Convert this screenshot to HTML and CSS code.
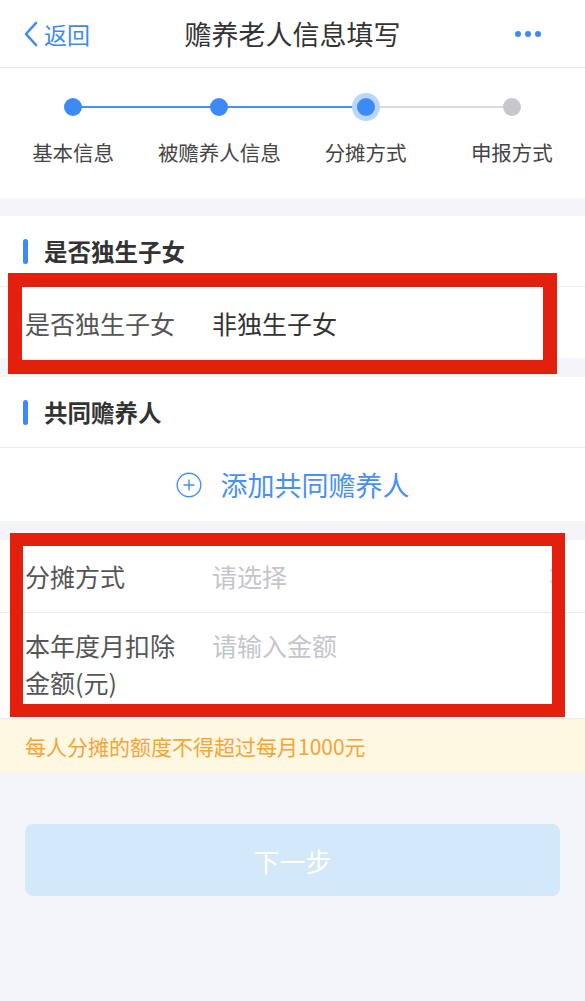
FILE: index.html
```html
<!DOCTYPE html>
<html lang="zh-CN">
<head>
  <meta charset="UTF-8">
  <title>赡养老人信息填写</title>
  <link rel="stylesheet" href="styles.css">
</head>
<body>

  <!-- Top nav bar -->
  <header class="nav">
    <a class="nav-back">
      <svg width="16" height="26" viewBox="0 0 16 26"><polyline points="13,2 3,13 13,24" fill="none" stroke="#3d8af7" stroke-width="2.6" stroke-linecap="round" stroke-linejoin="round"/></svg>
      <span>返回</span>
    </a>
    <h1 class="nav-title">赡养老人信息填写</h1>
    <span class="nav-more"><i></i><i></i><i></i></span>
  </header>

  <!-- Steps -->
  <div class="steps">
    <div class="step done"><span class="dot"></span><span class="step-label">基本信息</span></div>
    <div class="step done"><span class="dot"></span><span class="step-label">被赡养人信息</span></div>
    <div class="step current"><span class="dot"></span><span class="step-label">分摊方式</span></div>
    <div class="step"><span class="dot"></span><span class="step-label">申报方式</span></div>
  </div>

  <section class="card">
    <div class="card-title"><span class="bar"></span>是否独生子女</div>
    <div class="row">
      <span class="row-label">是否独生子女</span>
      <span class="row-value">非独生子女</span>
    </div>
  </section>

  <section class="card">
    <div class="card-title"><span class="bar"></span>共同赡养人</div>
    <div class="add-row">
      <svg width="26" height="26" viewBox="0 0 26 26"><circle cx="13" cy="13" r="11.8" fill="none" stroke="#4a8ff5" stroke-width="1.4"/><path d="M13 7.5v11M7.5 13h11" stroke="#4a8ff5" stroke-width="1.4"/></svg>
      <span>添加共同赡养人</span>
    </div>
  </section>

  <section class="card form">
    <div class="row">
      <span class="row-label">分摊方式</span>
      <span class="row-value placeholder">请选择</span>
      <svg class="arrow" width="9" height="16" viewBox="0 0 9 16"><polyline points="1.5,1.5 7.5,8 1.5,14.5" fill="none" stroke="#c8c8cc" stroke-width="1.6"/></svg>
    </div>
    <div class="row tall">
      <span class="row-label">本年度月扣除<br>金额(元)</span>
      <span class="row-value placeholder">请输入金额</span>
    </div>
  </section>

  <p class="tip">每人分摊的额度不得超过每月1000元</p>

  <div class="actions">
    <button class="next" disabled>下一步</button>
  </div>

  <!-- annotation boxes over the screenshot -->
  <div class="mark mark-one"></div>
  <div class="mark mark-two"></div>

</body>
</html>
```

FILE: styles.css
```css
body {
  margin: 0;
  position: relative;
  min-height: 1001px;
  background-color: #f4f5f9;
  font-family: "Noto Sans CJK SC", "Noto Sans", sans-serif;
  color: #333;
}

/* nav */
.nav {
  display: grid;
  grid-template-columns: 1fr auto 1fr;
  align-items: center;
  height: 67px;
  background-color: #fff;
  border-bottom: 1px solid #e3e4e8;
}

.nav-back {
  display: flex;
  align-items: center;
  gap: 5px;
  padding-left: 23px;
  color: #3d8af7;
  font-size: 23px;
}

.nav-title {
  margin: 0;
  font-size: 27px;
  font-weight: normal;
  color: #333;
}

.nav-more {
  justify-self: end;
  display: flex;
  gap: 4px;
  padding-right: 44px;
}

.nav-more i {
  width: 6px;
  height: 6px;
  border-radius: 50%;
  background-color: #3d8af7;
}

/* steps */
.steps {
  display: grid;
  grid-template-columns: repeat(4, 1fr);
  height: 130px;
  background-color: #fff;
  margin-bottom: 18px;
}

.step {
  position: relative;
  display: flex;
  flex-direction: column;
  align-items: center;
  padding-top: 30px;
}

.step::before {
  content: "";
  position: absolute;
  top: 38px;
  left: 50%;
  width: 100%;
  height: 2px;
  background-color: #d9dade;
}

.step.done::before {
  background-color: #4a8ff5;
}

.step:last-child::before {
  display: none;
}

.dot {
  position: relative;
  width: 18px;
  height: 18px;
  border-radius: 50%;
  background-color: #c7c8cd;
}

.done .dot,
.current .dot {
  background-color: #3d8af7;
}

.current .dot {
  box-shadow: 0 0 0 5px #b9d6fb;
}

.step-label {
  margin-top: 22px;
  font-size: 20.5px;
  line-height: 28px;
  color: #444;
  white-space: nowrap;
}

/* cards */
.card {
  background-color: #fff;
  margin-bottom: 19px;
}

.card-title {
  display: flex;
  align-items: center;
  gap: 16px;
  height: 70px;
  padding-left: 23px;
  font-size: 23.5px;
  font-weight: bold;
  color: #333;
  border-bottom: 1px solid #ececef;
}

.bar {
  width: 5px;
  height: 25px;
  border-radius: 3px;
  background-color: #3d8af7;
}

.row {
  display: flex;
  align-items: center;
  height: 71px;
  padding: 0 27px 0 25px;
  font-size: 25px;
}

.row-label {
  width: 187px;
  flex-shrink: 0;
  color: #555;
}

.row-value {
  flex: 1;
  color: #333;
}

.placeholder {
  color: #c4c5ca;
}

.add-row {
  display: flex;
  align-items: center;
  justify-content: center;
  gap: 19px;
  height: 73px;
  color: #4a8ff5;
  font-size: 27px;
}

.form {
  margin-bottom: 0;
}

.form .row {
  height: 72px;
  border-bottom: 1px solid #ececef;
}

.form .row.tall {
  align-items: flex-start;
  height: auto;
  padding-top: 14px;
  padding-bottom: 17px;
  line-height: 37px;
}

.tip {
  margin: 0;
  height: 54px;
  line-height: 54px;
  padding-left: 25px;
  background-color: #fef7e2;
  color: #f5a437;
  font-size: 21px;
}

.actions {
  padding: 51px 25px 0;
}

.next {
  display: block;
  width: 100%;
  height: 72px;
  border: none;
  border-radius: 8px;
  background-color: #d3e8f9;
  color: #fff;
  font-family: inherit;
  font-size: 26px;
}

/* red annotation boxes */
.mark {
  position: absolute;
  border: 14px solid #e31f0e;
}

.mark-one {
  left: 8px;
  top: 273px;
  width: 521px;
  height: 73px;
}

.mark-two {
  left: 10px;
  top: 533px;
  width: 529px;
  height: 158px;
  border-width: 13px;
}
```
